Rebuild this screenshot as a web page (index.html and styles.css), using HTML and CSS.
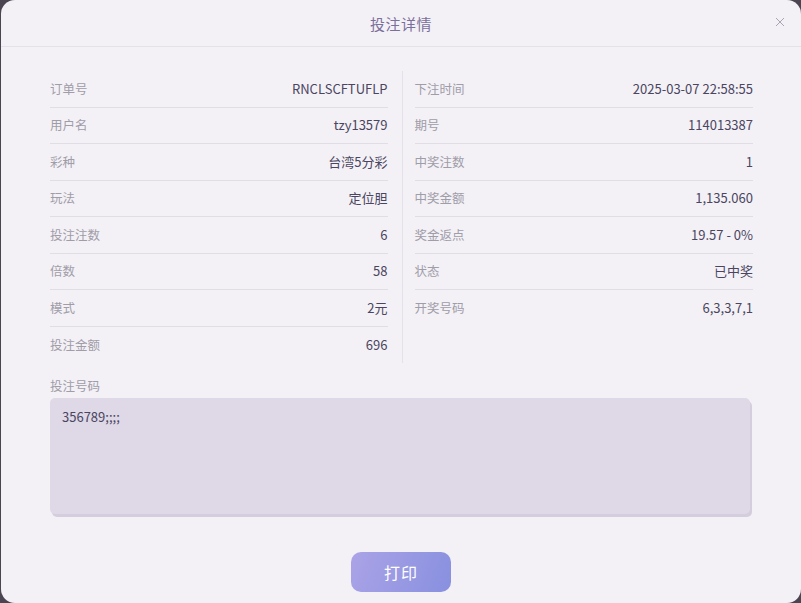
FILE: index.html
```html
<!DOCTYPE html>
<html lang="zh-CN">
<head>
<meta charset="utf-8">
<title>投注详情</title>
<link rel="stylesheet" href="styles.css">
</head>
<body>
<div class="modal">
  <div class="modal-header">
    <span class="modal-title">投注详情</span>
    <span class="close">
      <svg width="10" height="10" viewBox="0 0 10 10"><path d="M1 1L9 9M9 1L1 9" stroke="#aaa4b4" stroke-width="1" fill="none"/></svg>
    </span>
  </div>
  <div class="modal-body">
    <div class="info-grid">
      <div class="col col-left">
        <div class="row"><span class="label">订单号</span><span class="value">RNCLSCFTUFLP</span></div>
        <div class="row"><span class="label">用户名</span><span class="value">tzy13579</span></div>
        <div class="row"><span class="label">彩种</span><span class="value">台湾5分彩</span></div>
        <div class="row"><span class="label">玩法</span><span class="value">定位胆</span></div>
        <div class="row"><span class="label">投注注数</span><span class="value">6</span></div>
        <div class="row"><span class="label">倍数</span><span class="value">58</span></div>
        <div class="row"><span class="label">模式</span><span class="value">2元</span></div>
        <div class="row"><span class="label">投注金额</span><span class="value">696</span></div>
      </div>
      <div class="col col-right">
        <div class="row"><span class="label">下注时间</span><span class="value">2025-03-07 22:58:55</span></div>
        <div class="row"><span class="label">期号</span><span class="value">114013387</span></div>
        <div class="row"><span class="label">中奖注数</span><span class="value">1</span></div>
        <div class="row"><span class="label">中奖金额</span><span class="value">1,135.060</span></div>
        <div class="row"><span class="label">奖金返点</span><span class="value">19.57 - 0%</span></div>
        <div class="row"><span class="label">状态</span><span class="value">已中奖</span></div>
        <div class="row"><span class="label">开奖号码</span><span class="value">6,3,3,7,1</span></div>
      </div>
    </div>
    <div class="numbers">
      <div class="label numbers-label">投注号码</div>
      <div class="numbers-box">356789;;;;</div>
    </div>
    <div class="actions">
      <button class="print-btn">打印</button>
    </div>
  </div>
</div>
</body>
</html>
```
FILE: styles.css
```css
html, body {
  margin: 0;
  padding: 0;
}
body {
  background: #4b4552;
  width: 801px;
  height: 603px;
  overflow: hidden;
  font-family: "Noto Sans CJK SC", "Noto Sans", sans-serif;
}
.modal {
  box-sizing: border-box;
  margin-left: 1px;
  width: 800px;
  height: 603px;
  background: #f3f1f6;
  border-radius: 14px;
  display: flex;
  flex-direction: column;
}
.modal-header {
  position: relative;
  height: 47px;
  border-bottom: 1px solid #e4e1e9;
  display: flex;
  align-items: center;
  justify-content: center;
  box-sizing: border-box;
}
.modal-title {
  font-size: 15px;
  color: #7b6f9c;
  letter-spacing: 0.5px;
}
.close {
  position: absolute;
  right: 16px;
  top: 17px;
  width: 10px;
  height: 10px;
  display: block;
  line-height: 0;
}
.modal-body {
  padding: 24px 49px 0 49px;
  flex: 1;
  display: flex;
  flex-direction: column;
}
.info-grid {
  display: grid;
  grid-template-columns: 351.5px 351.5px;
}
.col-left {
  padding-right: 14px;
}
.col-right {
  border-left: 1px solid #e4e1e9;
  padding-left: 12px;
}
.row {
  box-sizing: border-box;
  height: 36.5px;
  padding-bottom: 1px;
  border-bottom: 1px solid #e0dde5;
  display: flex;
  align-items: center;
  justify-content: space-between;
  font-size: 13px;
}
.row:last-child {
  border-bottom: none;
}
.label {
  color: #a09ca8;
  font-size: 12.5px;
}
.value {
  color: #4a4560;
}
.numbers {
  margin-top: 13px;
}
.numbers-label {
  line-height: 20px;
  height: 20px;
}
.numbers-box {
  margin-top: 2px;
  width: 700px;
  height: 116px;
  box-sizing: border-box;
  background: #ded8e7;
  border-radius: 5px;
  box-shadow: 2px 3px 0 #d3cddd;
  padding: 9px 12px;
  font-size: 13px;
  color: #4a4560;
}
.actions {
  display: flex;
  justify-content: center;
  margin-top: 38px;
}
.print-btn {
  width: 100px;
  height: 40px;
  border: none;
  border-radius: 10px;
  background: linear-gradient(110deg, #aba3e7 0%, #8890df 100%);
  color: #ffffff;
  font-family: "Noto Sans CJK SC", "Noto Sans", sans-serif;
  font-size: 16px;
  letter-spacing: 1px;
  cursor: pointer;
}
```
